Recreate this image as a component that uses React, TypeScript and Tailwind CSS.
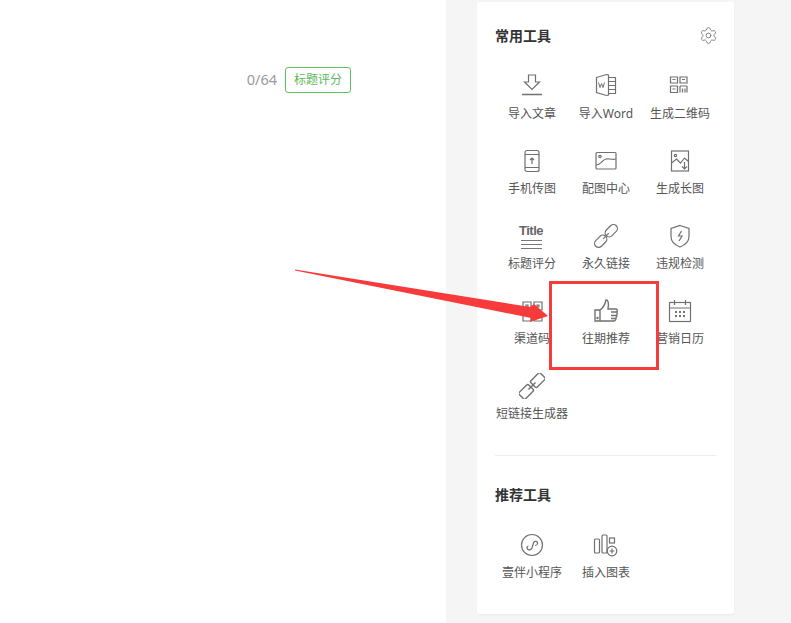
import React from "react";
import { Settings } from "lucide-react";

const S = { fill: "none", stroke: "#707070", strokeWidth: 1.2 } as const;
const I = ({ children, up = 0 }: { children: React.ReactNode; up?: number }) => (
  <svg width={26} height={26} viewBox={`0 ${up} 26 26`} {...S}>{children}</svg>
);

const icons: Record<string, React.ReactNode> = {
  import: <I up={1.5}><path d="M9.500 3.500h7v7h4l-7.500 7.500-7.500-7.500h4z" /><path d="M3 23h20" strokeWidth={1.5} /></I>,
  word: <I up={1.5}><path d="M3.500 6l10-3 2 .5v20l-2 .5-10-3z" /><path d="M15.500 6h7v16h-7M15.500 10h7M15.500 14h7M15.500 18h7" /><path d="M5.500 11l1.500 5 1.500-4 1.500 4 1.500-5" strokeWidth={1} /></I>,
  qr: <I up={1}><path d="M3.500 5h7v6h-7zM5.500 7.500h3M13 5h7v6h-7zM15 7.500h3M3.500 14h7v6.500h-7zM5.500 17h3M13 14h7M13 14v6.500M15.500 16.500v4M18 16.500v4M20 14v6.500" /></I>,
  phone: <I><rect x="6" y="2.500" width="14" height="21" rx="2" /><path d="M6 6.500h14M6 19.500h14M13 16v-6M11 12l2-2 2 2" /></I>,
  image: <I><rect x="3" y="4.500" width="20" height="16.500" rx="1" /><circle cx="7" cy="8.500" r="1.200" /><path d="M3 17c5 0 6-5 10-6 3-.8 5 1 10 0" /></I>,
  long: <I><rect x="4.500" y="3" width="17" height="20" /><circle cx="8.500" cy="7.500" r="1.200" /><path d="M4.500 15l5-4 4 4 4-5 4 3.500M17.500 14v7M15 18.500l2.500 2.500 2.500-2.500" /></I>,
  title: (
    <span className="-ml-[2px] flex w-[26px] flex-col items-center leading-none">
      <span className="font-['Liberation_Sans'] text-[13px] font-bold leading-[14px] tracking-[-0.5px] text-[#666666]">Title</span>
      <span className="mt-[2px] h-px w-[21px] bg-[#777777]" />
      <span className="mt-[3px] h-px w-[21px] bg-[#777777]" />
      <span className="mt-[3px] h-px w-[21px] bg-[#777777]" />
    </span>
  ),
  link: <I><g transform="rotate(-45 13 13)"><rect x="-1.500" y="9" width="14" height="8" rx="4" /><rect x="13.500" y="9" width="14" height="8" rx="4" /><path d="M9 13h8" /></g></I>,
  shield: <I><path d="M13 2.500l9 3v8c0 5-4 8.500-9 10.500-5-2-9-5.500-9-10.500v-8z" /><path d="M14.500 8l-3 5h3.500l-3 5" /></I>,
  channel: <I><path d="M4 4h8v8H4zM15 4h8v8h-8zM4 15h8v8H4zM15 15h8v8h-8z" /><path d="M7 7h2v2H7zM18 7h2v2h-2z" /></I>,
  thumb: <I><g strokeWidth={1.4}><path d="M2 12h5v11H2zM7 12c3-2 5-5 6-10 2 0 3 2 2 9h8c1 0 1.500 1 1.200 2l-.2 1.500c.5 1 .2 2-.3 2.500.3 1 0 2-.7 2.500.2 1.500-.5 3.500-2 3.500H7" /><path d="M18 14h6M18 17.500h5.500M18 20.500h4.500" /><circle cx="4.500" cy="20" r=".5" /></g></I>,
  calendar: <I><rect x="2.500" y="4.500" width="21" height="19" /><path d="M2.500 10h21M7.500 2v5M18.500 2v5" /><path d="M8 14h2M12 14h2M16 14h2M8 18h2M12 18h2M16 18h2" strokeWidth={2} /></I>,
  short: <I><g transform="rotate(-45 13 13)" strokeWidth={1.4}><rect x="-2" y="8.500" width="13.500" height="9" rx="1.500" /><rect x="14.500" y="8.500" width="13.500" height="9" rx="1.500" /><path d="M8 13h10" /></g></I>,
  mini: <I><circle cx="13" cy="13" r="10.500" /><path d="M8 15.500c0 3 4 3 5 .5l1.500-5c1-3 4.500-1.500 4 .5-.3 1.500-1.500 2-2.500 2M9.500 14c-1 0-1.500.5-1.500 1.500" /></I>,
  chart: <I><rect x="1.500" y="7" width="5" height="14" rx="1" /><rect x="9" y="3" width="5" height="18" rx="1" /><rect x="16.500" y="6" width="5" height="5" /><circle cx="19" cy="19" r="4.800" /><path d="M19 16.500v5M16.500 19h5" /></I>,
};

type Tool = [string, string];
const common: Tool[] = [
  ["import", "导入文章"], ["word", "导入Word"], ["qr", "生成二维码"],
  ["phone", "手机传图"], ["image", "配图中心"], ["long", "生成长图"],
  ["title", "标题评分"], ["link", "永久链接"], ["shield", "违规检测"],
  ["channel", "渠道码"], ["thumb", "往期推荐"], ["calendar", "营销日历"],
  ["short", "短链接生成器"],
];
const recommended: Tool[] = [["mini", "壹伴小程序"], ["chart", "插入图表"]];

const ToolGrid = ({ items }: { items: Tool[] }) => (
  <div className="grid grid-cols-[74px_74px_74px] auto-rows-[75px]">
    {items.map(([icon, label]) => (
      <div key={label} className="flex flex-col items-center">
        <div className="flex h-[26px] w-[26px] items-center justify-center">{icons[icon]}</div>
        <span className="mt-[6px] whitespace-nowrap text-[12px] leading-[18px] text-[#555555]">{label}</span>
      </div>
    ))}
  </div>
);

export default function App() {
  return (
    <div className="relative flex h-[623px] w-[791px] items-start overflow-hidden bg-[#f5f5f5] font-['Noto_Sans','Noto_Sans_CJK_SC',sans-serif]">
      <main className="h-[623px] w-[446px] bg-white pt-[67px]">
        <div className="flex items-center justify-end pr-[95px]">
          <span className="text-[14.500px] text-[#9a9aa2]">0/64</span>
          <button className="ml-[8px] h-[26px] w-[66px] rounded-[3px] border border-[#5cc25f] text-[12px] text-[#5cb85c]">标题评分</button>
        </div>
      </main>

      <aside className="ml-[31px] mt-[2px] h-[612px] w-[257px] rounded-[3px] bg-white px-[18px] pt-[25px] shadow-[0_1px_2px_rgba(0,0,0,0.05)]">
        <div className="flex h-[18px] w-[223px] items-center justify-between">
          <h2 className="text-[14px] font-bold leading-[18px] text-[#333333]">常用工具</h2>
          <Settings size={19} strokeWidth={1.1} color="#777777" className="-mt-[2px]" />
        </div>
        <div className="mt-[28px]">
          <ToolGrid items={common} />
        </div>
        <div className="mt-[7px] h-px w-[221px] bg-[#eeeeee]" />
        <h2 className="mt-[30px] h-[18px] text-[14px] font-bold leading-[18px] text-[#333333]">推荐工具</h2>
        <div className="mt-[28px]">
          <ToolGrid items={recommended} />
        </div>
      </aside>

      <div className="absolute left-[549px] top-[281px] h-[89px] w-[110px] border-[3px] border-[#f73b3b]" />
      <svg className="absolute left-0 top-0" width="791" height="623" viewBox="0 0 791 623">
        <path d="M295 269.500L530 307L534 304L548 316L530 322L531 318L295 270.500Z" fill="#f73b3b" />
      </svg>
    </div>
  );
}
